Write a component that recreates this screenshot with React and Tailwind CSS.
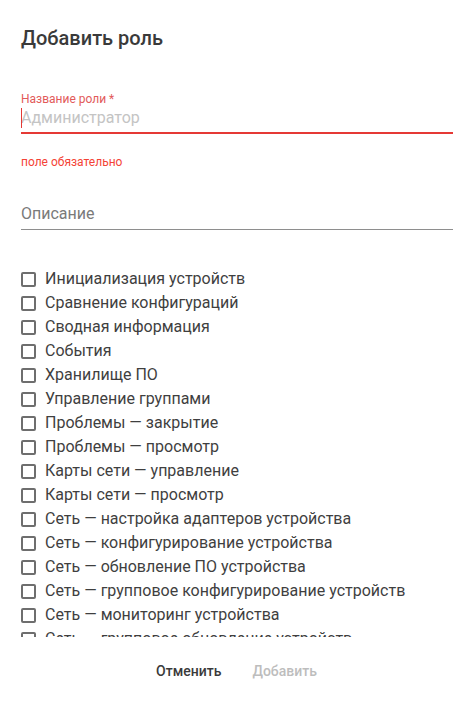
import React from 'react';

const permissions = [
  'Инициализация устройств',
  'Сравнение конфигураций',
  'Сводная информация',
  'События',
  'Хранилище ПО',
  'Управление группами',
  'Проблемы — закрытие',
  'Проблемы — просмотр',
  'Карты сети — управление',
  'Карты сети — просмотр',
  'Сеть — настройка адаптеров устройства',
  'Сеть — конфигурирование устройства',
  'Сеть — обновление ПО устройства',
  'Сеть — групповое конфигурирование устройств',
  'Сеть — мониторинг устройства',
  'Сеть — групповое обновление устройств',
  'Сеть — просмотр журнала устройства',
];

const App = () => {
  return (
    <div className="w-[472px] h-[704px] bg-white font-['Roboto',sans-serif] overflow-hidden">
      <div className="pt-[22px] px-[21px] pr-[19px]">
        {/* Header */}
        <h2 className="text-[20px] leading-8 font-medium text-[#3a3a3a]">Добавить роль</h2>

        {/* Role name field */}
        <label className="block mt-[39px] text-[12px] leading-[13px] text-[#e25a5a]">Название роли *</label>
        <div className="relative h-6 text-[16px] leading-6 text-[#c4c4c4]">
          <span className="absolute left-0 top-[2px] w-px h-5 bg-[#e53935]" />
          Администратор
        </div>
        <div className="mt-[2px] h-[2px] bg-[#e53935]" />
        <p className="mt-5 text-[12px] leading-4 text-[#f44336]">поле обязательно</p>

        {/* Description field */}
        <div className="mt-8 h-6 text-[16px] leading-6 text-[#7a7a7a]">Описание</div>
        <div className="mt-[3px] h-px bg-[#8e8e8e]" />

        {/* Permissions */}
        <div className="mt-[37px] h-[370px] overflow-hidden">
          {permissions.map((name) => (
            <div key={name} className="flex items-center gap-[9px] h-6">
              <span className="w-[15px] h-[15px] border-2 border-[#6e6e6e] rounded-[2px] shrink-0" />
              <span className="text-[16px] leading-6 text-[#3f3f3f] whitespace-nowrap">{name}</span>
            </div>
          ))}
        </div>
      </div>

      {/* Actions */}
      <div className="mt-[16px] flex justify-center gap-[15px] pl-[1px]">
        <button className="h-9 px-2 text-[14px] leading-9 font-medium text-[#3a3a3a]">Отменить</button>
        <button className="h-9 px-2 text-[14px] leading-9 font-medium text-[#bdbdbd]">Добавить</button>
      </div>
    </div>
  );
};

export default App;
